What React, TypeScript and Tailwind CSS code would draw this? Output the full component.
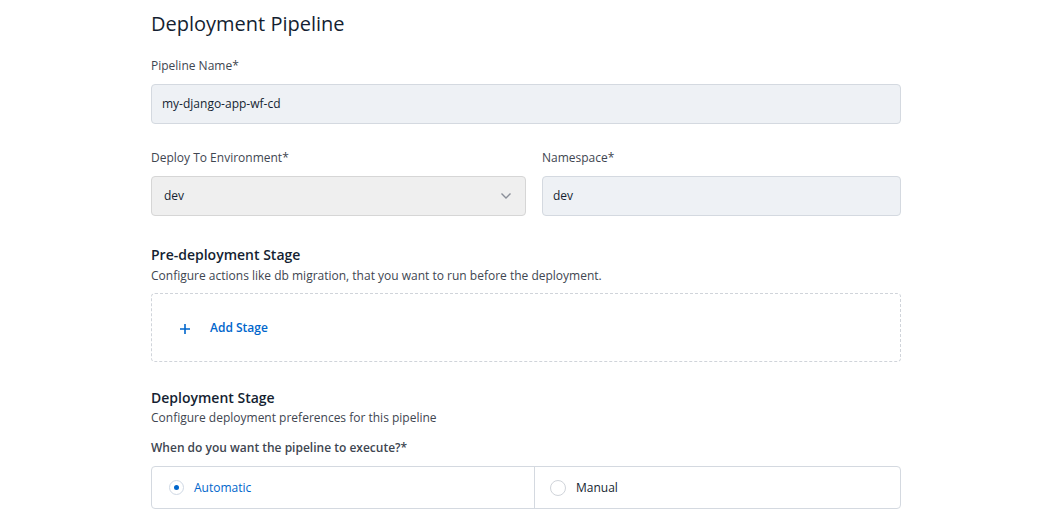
import React, { useState } from 'react'

const font = { fontFamily: '"Open Sans", "Liberation Sans", sans-serif' }

function Label({ children }: { children: React.ReactNode }) {
  return <label className="block text-[12px] leading-[18px] text-[#404651] mb-[9px]">{children}</label>
}

export default function App() {
  const [mode, setMode] = useState<'auto' | 'manual'>('auto')

  return (
    <div className="min-h-screen bg-white" style={font}>
      <div className="w-[750px] ml-[151px] pt-[10px]">
        <h1 className="text-[20px] leading-[27px] text-[#151f32] mb-[20px]">Deployment Pipeline</h1>

        <Label>Pipeline Name*</Label>
        <div className="h-[40px] rounded-[4px] border border-[#d4d9e0] bg-[#eef1f5] flex items-center px-[10px] text-[12px] text-[#151f32]">
          my-django-app-wf-cd
        </div>

        <div className="flex gap-[16px] mt-[25px]">
          <div className="w-[375px]">
            <Label>Deploy To Environment*</Label>
            <div className="h-[40px] rounded-[4px] border border-[#d6d6d6] bg-[#efefef] flex items-center justify-between pl-[12px] pr-[13px] text-[12px] text-[#151f32]">
              <span>dev</span>
              <svg width="12" height="8" viewBox="0 0 12 8" fill="none" stroke="#8a8f99" strokeWidth="1.4">
                <path d="M1.5 1.5 L6 6 L10.5 1.5" />
              </svg>
            </div>
          </div>
          <div className="flex-1">
            <Label>Namespace*</Label>
            <div className="h-[40px] rounded-[4px] border border-[#d4d9e0] bg-[#eef1f5] flex items-center px-[10px] text-[12px] text-[#151f32]">
              dev
            </div>
          </div>
        </div>

        <h2 className="mt-[29px] text-[14px] leading-[20px] font-semibold text-[#151f32]">Pre-deployment Stage</h2>
        <p className="mt-[2px] text-[12px] leading-[18px] text-[#404651]">
          Configure actions like db migration, that you want to run before the deployment.
        </p>
        <div className="mt-[8px] h-[69px] rounded-[4px] border border-dashed border-[#d0d4da] flex items-center pl-[27px]">
          <button className="flex items-center text-[#0066cc] text-[12px] font-semibold">
            <svg width="12" height="12" viewBox="0 0 12 12" stroke="#0066cc" strokeWidth="1.6" className="mt-[2px]">
              <path d="M6 1v10M1 6h10" />
            </svg>
            <span className="ml-[19px]">Add Stage</span>
          </button>
        </div>

        <h2 className="mt-[26px] text-[14px] leading-[20px] font-semibold text-[#151f32]">Deployment Stage</h2>
        <p className="mt-[1px] text-[12px] leading-[18px] text-[#404651]">Configure deployment preferences for this pipeline</p>
        <p className="mt-[12px] text-[12px] leading-[18px] font-semibold text-[#404651]">
          When do you want the pipeline to execute?*
        </p>
        <div className="mt-[9px] h-[43px] rounded-[4px] border border-[#d4d9e0] flex text-[12px]">
          <button
            onClick={() => setMode('auto')}
            className="w-[383px] border-r border-[#d4d9e0] flex items-center pl-[17px]"
          >
            <Radio on={mode === 'auto'} />
            <span className={mode === 'auto' ? 'ml-[10px] text-[#0066cc]' : 'ml-[10px] text-[#151f32]'}>Automatic</span>
          </button>
          <button onClick={() => setMode('manual')} className="flex-1 flex items-center pl-[15px]">
            <Radio on={mode === 'manual'} />
            <span className={mode === 'manual' ? 'ml-[10px] text-[#0066cc]' : 'ml-[10px] text-[#151f32]'}>Manual</span>
          </button>
        </div>
      </div>
    </div>
  )
}

function Radio({ on }: { on: boolean }) {
  return (
    <span
      className={
        on
          ? 'w-[15px] h-[15px] rounded-full border border-[#cfd8e4] bg-white flex items-center justify-center'
          : 'w-[16px] h-[16px] rounded-full border border-[#d0d4da] bg-white flex items-center justify-center'
      }
    >
      {on && <span className="w-[5px] h-[5px] rounded-full bg-[#0066cc]" />}
    </span>
  )
}
